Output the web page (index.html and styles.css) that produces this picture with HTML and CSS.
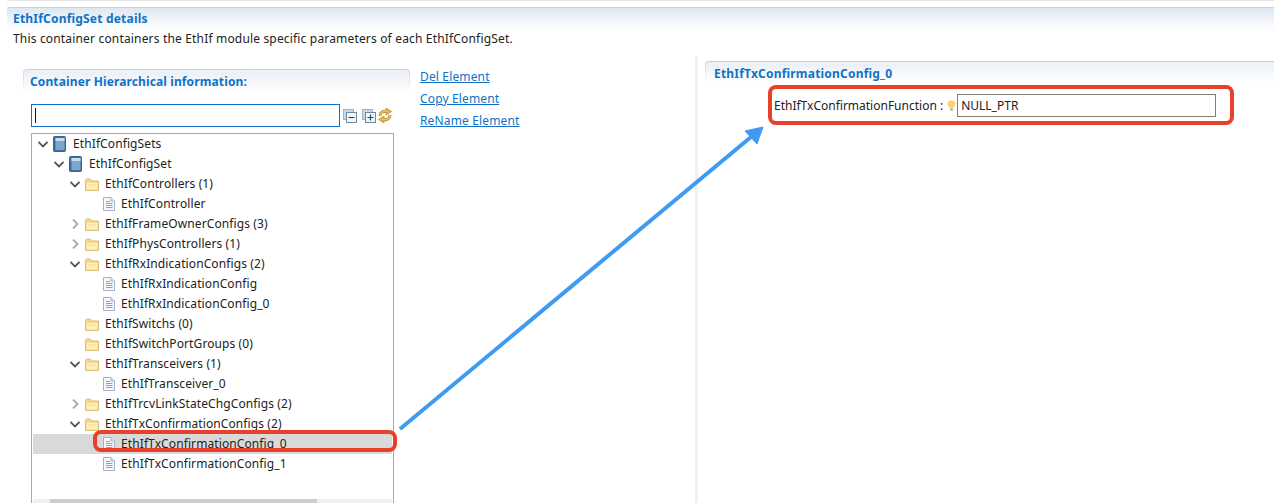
FILE: index.html
```html
<!DOCTYPE html>
<html lang="en">
<head>
    <meta charset="UTF-8">
    <title>EthIfConfigSet details</title>
    <link rel="stylesheet" href="styles.css">
</head>
<body>
    <svg class="defs" width="0" height="0">
        <symbol id="i-open" viewBox="0 0 10 10"><path d="M.5 3l4.500 4.500 4.500-4.500" fill="none" stroke="#555" stroke-width="1.800"/></symbol>
        <symbol id="i-closed" viewBox="0 0 10 10"><path d="M3 .5l4.500 4.500-4.500 4.500" fill="none" stroke="#a8a8a8" stroke-width="1.800"/></symbol>
        <symbol id="i-book" viewBox="0 0 13 16">
            <rect x=".5" y=".5" width="12" height="15" rx="1" fill="#3f6f9f" stroke="#3a648e"/>
            <rect x="2.500" y="2" width="9" height="12" fill="#7da6cc"/>
            <rect x="2.500" y="2" width="9" height="3" fill="#c9dcec"/>
        </symbol>
        <symbol id="i-folder" viewBox="0 0 14 13">
            <path d="M.5 2.500V12.500H13.500V3H6.500L5.500 1H1.500Z" fill="#f5d98e" stroke="#dcbd7c"/>
            <path d="M1.500 5H12.500V11.500H1.500Z" fill="#fdf0bd"/>
            <path d="M3 7H11" stroke="#f3d78a"/>
        </symbol>
        <symbol id="i-doc" viewBox="0 0 12 14">
            <path d="M.5 .5H8L11.500 4V13.500H.5Z" fill="#f6f8fc" stroke="#a3b0d0"/>
            <path d="M8 .5V4H11.500" fill="#dfe5f2" stroke="#a3b0d0"/>
            <path d="M3 4.500H7M3 6.500H9.500M3 8.500H9.500M3 10.500H9.500" stroke="#8ea0cc"/>
        </symbol>
    </svg>

    <div class="page">
        <header class="details-head">
            <h1>EthIfConfigSet details</h1>
            <p>This container containers the EthIf module specific parameters of each EthIfConfigSet.</p>
        </header>

        <div class="columns">
            <div class="left-col">
                <section class="hier">
                    <h2>Container Hierarchical information:</h2>
                    <div class="filter">
                        <div class="filter-input"><span class="caret"></span></div>
                        <svg class="tool" width="14" height="14" viewBox="0 0 14 14"><rect x=".5" y=".5" width="10" height="10" fill="#c9d8e6" stroke="#9fb4c6"/><rect x="3.500" y="3.500" width="10" height="10" fill="#f2f6fa" stroke="#6d8aa3"/><path d="M5.500 8.500h6" stroke="#1f4f77" stroke-width="1.200"/></svg>
                        <svg class="tool" width="14" height="14" viewBox="0 0 14 14"><rect x=".5" y=".5" width="10" height="10" fill="#c9d8e6" stroke="#9fb4c6"/><rect x="3.500" y="3.500" width="10" height="10" fill="#f2f6fa" stroke="#6d8aa3"/><path d="M5.500 8.500h6M8.500 5.500v6" stroke="#1f4f77" stroke-width="1.200"/></svg>
                        <svg class="tool tool-sync" width="14" height="15" viewBox="0 0 14 15">
                            <path d="M2 8C2 4.500 5.500 2.500 9 3.500" fill="none" stroke="#b08428" stroke-width="3"/>
                            <path d="M12 7C12 10.500 8.500 12.500 5 11.500" fill="none" stroke="#b08428" stroke-width="3"/>
                            <path d="M8 0L13.500 3.500 8 7Z" fill="#e8b544" stroke="#b08428" stroke-width=".7"/>
                            <path d="M6 8L.5 11.500 6 15Z" fill="#e8b544" stroke="#b08428" stroke-width=".7"/>
                            <path d="M2 8C2 4.500 5.500 2.500 9 3.500M12 7C12 10.500 8.500 12.500 5 11.500" fill="none" stroke="#f2c85c" stroke-width="1.500"/>
                        </svg>
                    </div>
                    <div class="tree">
                        <div class="row depth-0"><svg class="twisty"><use href="#i-open"/></svg><svg class="ic ic-book"><use href="#i-book"/></svg>EthIfConfigSets</div>
                        <div class="row depth-1"><svg class="twisty"><use href="#i-open"/></svg><svg class="ic ic-book"><use href="#i-book"/></svg>EthIfConfigSet</div>
                        <div class="row depth-2"><svg class="twisty"><use href="#i-open"/></svg><svg class="ic ic-folder"><use href="#i-folder"/></svg>EthIfControllers (1)</div>
                        <div class="row depth-3"><span class="twisty"></span><svg class="ic ic-doc"><use href="#i-doc"/></svg>EthIfController</div>
                        <div class="row depth-2"><svg class="twisty"><use href="#i-closed"/></svg><svg class="ic ic-folder"><use href="#i-folder"/></svg>EthIfFrameOwnerConfigs (3)</div>
                        <div class="row depth-2"><svg class="twisty"><use href="#i-closed"/></svg><svg class="ic ic-folder"><use href="#i-folder"/></svg>EthIfPhysControllers (1)</div>
                        <div class="row depth-2"><svg class="twisty"><use href="#i-open"/></svg><svg class="ic ic-folder"><use href="#i-folder"/></svg>EthIfRxIndicationConfigs (2)</div>
                        <div class="row depth-3"><span class="twisty"></span><svg class="ic ic-doc"><use href="#i-doc"/></svg>EthIfRxIndicationConfig</div>
                        <div class="row depth-3"><span class="twisty"></span><svg class="ic ic-doc"><use href="#i-doc"/></svg>EthIfRxIndicationConfig_0</div>
                        <div class="row depth-2"><span class="twisty"></span><svg class="ic ic-folder"><use href="#i-folder"/></svg>EthIfSwitchs (0)</div>
                        <div class="row depth-2"><span class="twisty"></span><svg class="ic ic-folder"><use href="#i-folder"/></svg>EthIfSwitchPortGroups (0)</div>
                        <div class="row depth-2"><svg class="twisty"><use href="#i-open"/></svg><svg class="ic ic-folder"><use href="#i-folder"/></svg>EthIfTransceivers (1)</div>
                        <div class="row depth-3"><span class="twisty"></span><svg class="ic ic-doc"><use href="#i-doc"/></svg>EthIfTransceiver_0</div>
                        <div class="row depth-2"><svg class="twisty"><use href="#i-closed"/></svg><svg class="ic ic-folder"><use href="#i-folder"/></svg>EthIfTrcvLinkStateChgConfigs (2)</div>
                        <div class="row depth-2"><svg class="twisty"><use href="#i-open"/></svg><svg class="ic ic-folder"><use href="#i-folder"/></svg>EthIfTxConfirmationConfigs (2)</div>
                        <div class="row depth-3 selected"><span class="twisty"></span><svg class="ic ic-doc"><use href="#i-doc"/></svg>EthIfTxConfirmationConfig_0</div>
                        <div class="row depth-3"><span class="twisty"></span><svg class="ic ic-doc"><use href="#i-doc"/></svg>EthIfTxConfirmationConfig_1</div>
                        <div class="hscroll"><span class="thumb"></span></div>
                    </div>
                </section>
                <nav class="actions">
                    <a href="#">Del Element</a>
                    <a href="#">Copy Element</a>
                    <a href="#">ReName Element</a>
                </nav>
            </div>

            <div class="sash"></div>

            <section class="config">
                <h2>EthIfTxConfirmationConfig_0</h2>
                <div class="field">
                    <label>EthIfTxConfirmationFunction :</label>
                    <svg class="bulb" width="9" height="11" viewBox="0 0 9 11"><path d="M4.500 .5C7 .5 8.500 2 8.500 4 8.500 5.500 7 6.500 6.500 8H2.500C2 6.500 .5 5.500 .5 4 .5 2 2 .5 4.500 .5Z" fill="#fbd46a"/><rect x="3" y="8.500" width="3" height="2" fill="#b9a98a"/></svg>
                    <div class="field-input">NULL_PTR</div>
                </div>
            </section>
        </div>
    </div>

    <!-- callouts drawn over the screenshot -->
    <div class="mark mark-row"></div>
    <div class="mark mark-field"></div>
    <svg class="arrow" width="1274" height="503" viewBox="0 0 1274 503">
        <path d="M400 429L751 137" stroke="#3f9bf2" stroke-width="4" fill="none"/>
        <path d="M763 127L745 131 757 144Z" fill="#3f9bf2" stroke="#3f9bf2" stroke-width="1"/>
    </svg>
</body>
</html>
```
FILE: styles.css
```css
html, body { margin: 0; height: 100%; overflow: hidden; background: #fff; }
body { position: relative; font-family: "Noto Sans", "Open Sans", sans-serif; font-size: 12px; color: #222; }
.defs { position: absolute; }
.page { padding-top: 1px; }

.details-head { margin-top: 6px; margin-left: 7px; padding: 0 0 0 6px; border-top: 1px solid #c5d3e2; border-top-left-radius: 3px; background: linear-gradient(#dfe7f1 0, #fff 22px); box-shadow: 0 -6px 0 0 #fff, 0 -7px 0 0 #e6e6e6; }
.details-head h1 { margin: 0; padding-top: 2px; font-size: 12px; line-height: 17px; font-weight: 700; color: #0f72c8; letter-spacing: .2px; }
.details-head p { margin: 3px 0 0 0; line-height: 17px; color: #222; letter-spacing: .17px; }

.columns { display: flex; margin-top: 9px; }
.left-col { display: flex; width: 695px; padding-left: 23px; padding-top: 13px; box-sizing: border-box; }

.hier { width: 387px; height: 435px; box-sizing: border-box; }
.hier h2 { margin: 0; height: 24px; padding: 3px 0 0 6px; box-sizing: border-box; font-size: 12px; line-height: 17px; font-weight: 700; color: #0f72c8; letter-spacing: .12px; border: 1px solid transparent; border-bottom: 0; border-radius: 4px 4px 0 0; background: linear-gradient(#e9eff6, #fff 22px) padding-box, linear-gradient(#c5d3e2, #fff 24px) border-box; }

.filter { display: flex; align-items: center; margin: 11px 0 0 8px; height: 23px; }
.filter-input { width: 309px; height: 23px; border: 1px solid #0f72c8; box-sizing: border-box; background: #fff; display: flex; align-items: center; padding-left: 3px; }
.caret { width: 1px; height: 15px; background: #111; }
.tool { margin-left: 3px; flex: none; }
.tool + .tool { margin-left: 5px; }
.tool + .tool.tool-sync { margin-left: 2px; }

.tree { margin: 6px 0 0 8px; width: 363px; height: 371px; border: 1px solid #a9a9a9; border-bottom: 0; box-sizing: border-box; position: relative; overflow: hidden; letter-spacing: .1px; }
.row { display: flex; align-items: center; height: 20px; line-height: 20px; color: #222; white-space: nowrap; margin: 0 1px; }
.depth-0 { padding-left: 5px; }
.depth-1 { padding-left: 21px; }
.depth-2 { padding-left: 37px; }
.depth-3 { padding-left: 55px; }
.twisty { width: 10px; height: 10px; margin-right: 5px; flex: none; }
.ic { flex: none; }
.ic-book { width: 13px; height: 16px; margin-right: 7px; }
.ic-folder { width: 14px; height: 13px; margin-right: 6px; }
.ic-doc { width: 12px; height: 14px; margin-right: 6px; }
.selected { background: #d9d9d9; }

.hscroll { position: absolute; left: 1px; right: 1px; top: 365px; height: 6px; background: #f0f0f0; }
.thumb { display: block; margin-left: 17px; width: 267px; height: 6px; background: #cdcdcd; }

.actions { display: flex; flex-direction: column; gap: 5px; margin-left: 10px; margin-top: -1px; }
.actions a { color: #0f72c8; line-height: 17px; text-decoration: underline; letter-spacing: .15px; }

.sash { width: 3px; height: 448px; background: #eef1f5; flex: none; }
.config { flex: 1; margin: 5px 0 0 7px; }
.config h2 { margin: 0; height: 22px; padding: 3px 0 0 8px; box-sizing: border-box; font-size: 12px; line-height: 17px; font-weight: 700; color: #0f72c8; letter-spacing: .2px; border: 1px solid transparent; border-bottom: 0; border-right: 0; border-radius: 4px 0 0 0; background: linear-gradient(#e9eff6, #fff 20px) padding-box, linear-gradient(#c5d3e2, #fff 22px) border-box; }

.field { display: flex; align-items: center; margin: 11px 0 0 69px; height: 23px; }
.field label { line-height: 17px; margin-right: 4px; color: #222; }
.bulb { flex: none; }
.field-input { width: 259px; height: 23px; margin-left: 1px; padding-left: 3px; line-height: 21px; border: 1px solid #7e7e7e; box-sizing: border-box; color: #222; }

.mark { position: absolute; border: 4px solid #e8412a; box-sizing: border-box; }
.mark-row { left: 93px; top: 430px; width: 304px; height: 22px; border-radius: 8px; }
.mark-field { left: 768px; top: 85px; width: 466px; height: 40px; border-radius: 8px; }
.arrow { position: absolute; left: 0; top: 0; pointer-events: none; }
```
